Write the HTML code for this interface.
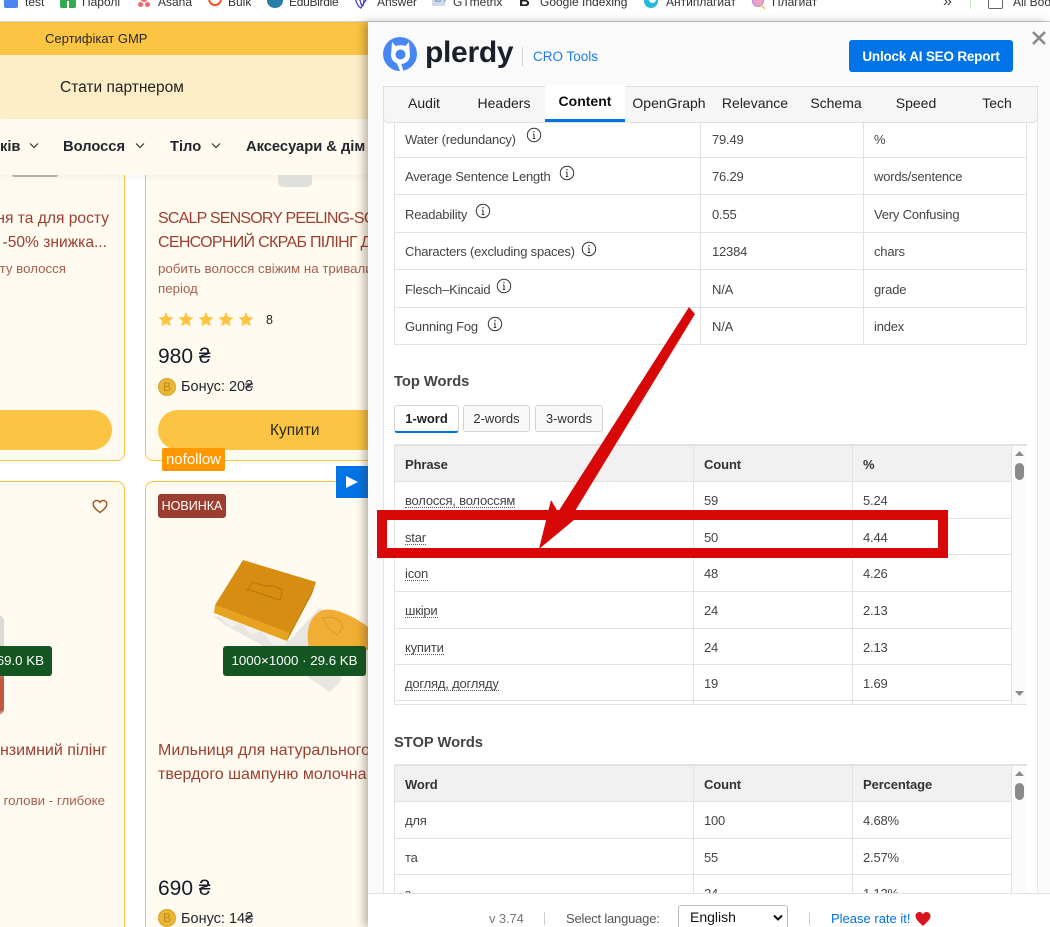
<!DOCTYPE html>
<html><head><meta charset="utf-8"><title>Plerdy</title>
<style>
html,body{margin:0;padding:0;width:1050px;height:927px;overflow:hidden;background:#fff;font-family:"Liberation Sans","Noto Sans CJK SC",sans-serif}
#w{position:relative;left:0;top:0;width:1050px;height:927px;overflow:hidden;background:#fff}
div,span,svg{position:absolute}
.t{white-space:nowrap;line-height:20px;height:20px;margin-top:1px}
.bm{font-size:12px;color:#333;top:-8px;margin-top:0}
.b{font-weight:bold}
.p{color:#444;font-size:13px;letter-spacing:-.2px}
.p.b{letter-spacing:-.1px}
.u{position:static;border-bottom:1px dotted #555;line-height:13px;display:inline-block}
.tl{font-size:14px;color:#222;top:93px;text-align:center;width:80px;margin-top:0}
.ti{color:#9a3f30;font-size:16px}
.su{color:#a5604f;font-size:13.3px}
.wb{top:405px;height:25px;background:#f8f8f8;border:1px solid #d5d5d5;border-radius:3px;font-size:13px;color:#333;text-align:center;line-height:25px}
.bar{background:#e2e2e2}
.coin{width:16px;height:16px;background:#e9b733;border:1px solid #d9a32a;border-radius:9px}
</style></head><body><div id="w">

<!-- bookmarks bar -->
<div style="left:0;top:0;width:1050px;height:21px;background:#fff"></div>
<div style="left:0;top:21px;width:1050px;height:1px;background:#cfcfcf"></div>
<div style="left:4px;top:-6px;width:14px;height:14px;background:#4a86f0;border-radius:2px"></div>
<div class="t bm" style="left:25px">test</div>
<div style="left:60px;top:-6px;width:16px;height:14px;background:#34a853;border-radius:2px"></div>
<div style="left:67px;top:1px;width:2px;height:7px;background:#fff"></div>
<div class="t bm" style="left:82px">Паролі</div>
<div style="left:141px;top:-3px;width:6px;height:5px;background:#f06a6a;border-radius:3px"></div>
<div style="left:138px;top:2px;width:5px;height:5px;background:#f06a6a;border-radius:3px"></div>
<div style="left:145px;top:2px;width:5px;height:5px;background:#f06a6a;border-radius:3px"></div>
<div class="t bm" style="left:158px">Asana</div>
<div style="left:208px;top:-4px;width:10px;height:8px;border:2px solid #f4511e;border-top:0;border-radius:0 0 8px 8px"></div>
<div class="t bm" style="left:228px">Bulk</div>
<div style="left:267px;top:-7px;width:16px;height:15px;background:#2a7fa8;border-radius:8px"></div>
<div class="t bm" style="left:289px;letter-spacing:-.3px">EduBirdie</div>
<svg style="left:354px;top:-4px" width="18" height="13"><path d="M1 0C2 8 5 11 7 12C9 8 12 3 16 0M5 0C6 5 7 8 8 10M10 0C10 4 10 7 9 10" fill="none" stroke="#4a3fd0" stroke-width="1.3"/></svg>
<div class="t bm" style="left:377px">Answer</div>
<div style="left:432px;top:-4px;width:13px;height:10px;background:#cfd9ea"></div>
<div class="t bm b" style="left:434px;top:-10px;font-size:10px;color:#7fa0cc">GT</div>
<div class="t bm" style="left:453px">GTmetrix</div>
<div class="t bm b" style="left:519px;font-size:15px;color:#222">B</div>
<div class="t bm" style="left:540px">Google Indexing</div>
<div style="left:644px;top:-6px;width:14px;height:14px;background:#26bcd7;border-radius:7px"></div>
<div style="left:649px;top:-5px;width:7px;height:8px;background:#fff;border-radius:4px"></div>
<div class="t bm" style="left:666px">Антиплагиат</div>
<div style="left:752px;top:-5px;width:10px;height:10px;background:#e9a6c8;border:1px solid #b889d8;border-radius:6px"></div>
<svg style="left:758px;top:2px" width="8" height="8"><path d="M1 1L7 7" stroke="#f2b56b" stroke-width="1.5"/></svg>
<div class="t bm" style="left:772px">Плагиат</div>
<div class="t bm" style="left:943px;font-size:16px;color:#444">»</div>
<div style="left:970px;top:0;width:1px;height:9px;background:#c9e4c0"></div>
<div style="left:988px;top:-6px;width:13px;height:13px;border:1px solid #666;border-radius:2px"></div>
<div class="t bm" style="left:1013px;width:37px;overflow:hidden">All Bookmarks</div>

<!-- cards -->
<div style="left:-20px;top:150px;width:143px;height:309px;background:#fffbf0;border:1px solid #fcc443;border-radius:8px"></div>
<div style="left:145px;top:150px;width:260px;height:309px;background:#fffbf0;border:1px solid #fcc443;border-radius:8px"></div>
<div style="left:-20px;top:481px;width:143px;height:445px;background:#fffbf0;border:1px solid #fcc443;border-bottom:0;border-radius:8px 8px 0 0"></div>
<div style="left:145px;top:481px;width:260px;height:445px;background:#fffbf0;border:1px solid #fcc443;border-bottom:0;border-radius:8px 8px 0 0"></div>

<!-- site header -->
<div style="left:0;top:22px;width:368px;height:33px;background:#fcc443"></div>
<div class="t" style="left:45px;top:28px;font-size:13px;color:#2a2a2a">Сертифікат GMP</div>
<div style="left:0;top:55px;width:368px;height:64px;background:#fdeec7"></div>
<div class="t" style="left:60px;top:77px;font-size:15.500px;color:#222">Стати партнером</div>

<!-- nav -->
<div style="left:0;top:119px;width:368px;height:56px;background:#fffaef;box-shadow:0 3px 6px rgba(0,0,0,.04)"></div>
<div style="left:12px;top:175px;width:46px;height:2px;background:#b5b2aa;border-radius:0 0 20px 20px"></div>
<div style="left:278px;top:175px;width:34px;height:12px;background:#dfdfdc;border-radius:0 0 5px 5px"></div>
<div class="t b" style="left:0;top:136px;font-size:14.700px;color:#22262e">ків</div>
<div class="t b" style="left:63px;top:136px;font-size:14.700px;color:#22262e">Волосся</div>
<div class="t b" style="left:170px;top:136px;font-size:14.700px;color:#22262e">Тіло</div>
<div class="t b" style="left:246px;top:136px;font-size:14.700px;color:#22262e">Аксесуари &amp; дім</div>
<svg style="left:29px;top:142px" width="10" height="8"><path d="M1 1.500L5 5.500L9 1.500" fill="none" stroke="#333" stroke-width="1.200"/></svg>
<svg style="left:135px;top:142px" width="10" height="8"><path d="M1 1.500L5 5.500L9 1.500" fill="none" stroke="#333" stroke-width="1.200"/></svg>
<svg style="left:211px;top:142px" width="10" height="8"><path d="M1 1.500L5 5.500L9 1.500" fill="none" stroke="#333" stroke-width="1.200"/></svg>

<!-- card 1 text -->
<div class="t ti" style="right:941px;top:208px;font-size:15.600px">ня та для росту</div>
<div class="t ti" style="right:943px;top:232px;font-size:15.600px">-50% знижка...</div>
<div class="t su" style="right:984px;top:258px">ту волосся</div>
<div style="left:-30px;top:410px;width:142px;height:40px;background:#fcc443;border-radius:20px"></div>

<!-- card 2 text -->
<div class="t ti" style="left:158px;top:208px;letter-spacing:-.8px">SCALP SENSORY PEELING-SCALP</div>
<div class="t ti" style="left:158px;top:232px;letter-spacing:-.7px">СЕНСОРНИЙ СКРАБ ПІЛІНГ ДЛЯ</div>
<div class="t su" style="left:158px;top:258px">робить волосся свіжим на тривалий</div>
<div class="t su" style="left:158px;top:278px">період</div>
<svg style="left:157px;top:311px" width="100" height="18" fill="#fcc443">
<polygon points="9,1 11.200,6 16.500,6.500 12.500,10 13.700,15.300 9,12.500 4.300,15.300 5.500,10 1.500,6.500 6.800,6"/>
<polygon points="29,1 31.200,6 36.500,6.500 32.500,10 33.700,15.300 29,12.500 24.300,15.300 25.500,10 21.500,6.500 26.800,6"/>
<polygon points="49,1 51.200,6 56.500,6.500 52.500,10 53.700,15.300 49,12.500 44.300,15.300 45.500,10 41.500,6.500 46.800,6"/>
<polygon points="69,1 71.200,6 76.500,6.500 72.500,10 73.700,15.300 69,12.500 64.300,15.300 65.500,10 61.500,6.500 66.800,6"/>
<polygon points="89,1 91.200,6 96.500,6.500 92.500,10 93.700,15.300 89,12.500 84.300,15.300 85.500,10 81.500,6.500 86.800,6"/>
</svg>
<div class="t" style="left:266px;top:309px;font-size:12.500px;color:#222">8</div>
<div class="t" style="left:158px;top:346px;font-size:21px;color:#161b2b">980 ₴</div>
<div class="coin" style="left:158px;top:378px"></div>
<div class="t" style="left:158px;top:376px;width:18px;text-align:center;font-size:12px;color:#b98a1c">B</div>
<div class="t" style="left:181px;top:376px;font-size:14.500px;color:#20242e">Бонус: 20₴</div>
<div style="left:158px;top:410px;width:240px;height:40px;background:#fcc443;border-radius:20px"></div>
<div class="t" style="left:270px;top:420px;font-size:15.500px;color:#2a2a1a">Купити</div>
<div class="t" style="left:162px;top:448px;width:63px;height:23px;line-height:23px;margin-top:0;background:#ff9800;border-radius:2px;color:#fff;font-size:15px;text-align:center">nofollow</div>
<div style="left:336px;top:466px;width:32px;height:32px;background:#0073e6"></div>
<svg style="left:345px;top:475px" width="14" height="14"><polygon points="1,1 13,7 1,13" fill="#fff"/></svg>

<!-- row 2 -->
<svg style="left:92px;top:499px" width="16" height="15"><path d="M8 13.500C4 10.500 1.200 8 1.200 5C1.200 2.800 3 1.500 4.700 1.500C6 1.500 7.300 2.200 8 3.400C8.700 2.200 10 1.500 11.300 1.500C13 1.500 14.800 2.800 14.800 5C14.800 8 12 10.500 8 13.500Z" fill="none" stroke="#9a5a30" stroke-width="1.400"/></svg>
<div style="left:-20px;top:615px;width:24px;height:100px;background:linear-gradient(#dcdad6 0,#dcdad6 45%,#c4573f 65%,#c4573f 95%,#ccc 100%);border-radius:6px"></div>
<div class="t" style="left:-20px;top:646px;width:72px;height:30px;line-height:30px;margin-top:0;background:#135622;border-radius:3px;color:#fff;font-size:13.300px;text-align:right"><span style="position:static;padding-right:8px">69.0 KB</span></div>
<div class="t" style="left:158px;top:494px;width:68px;height:24px;line-height:24px;margin-top:0;background:#9b3d2f;border-radius:3px;color:#fff;font-size:12.500px;text-align:center">НОВИНКА</div>

<!-- soap -->
<svg style="left:205px;top:555px" width="163" height="140">
<polygon points="7,60 20,70 53,88 125,137 135,127 145,85 115,52 85,85" fill="#e9e5e0"/>
<path d="M14 62L26 72L36 68L46 80L56 76L68 90L80 90L95 60Z" fill="#f4f1ed"/>
<polygon points="38,5 111,27 84,78 10,50" fill="#d68d11"/>
<polygon points="10,50 84,78 82,86 9,58" fill="#e8a31e"/>
<polygon points="111,27 84,78 82,86 107,39" fill="#c5830d"/>
<path d="M42 35L48 27L60 31L70 31L77 35L76 43L74 45L45 35Z" fill="none" stroke="#b97a0d" stroke-width="1.300"/>
<path d="M104 92C100 75 105 60 118 55C130 52 150 62 163 72L163 95Z" fill="#f0ae35"/>
<path d="M118 63L127 62L135 66L138 72L132 80L122 72Z" fill="none" stroke="#dd9a25" stroke-width="1"/>
</svg>
<div class="t" style="left:223px;top:646px;width:143px;height:30px;line-height:30px;margin-top:0;background:#135622;border-radius:3px;color:#fff;font-size:13.300px;text-align:center">1000×1000 · 29.6 KB</div>

<div class="t ti" style="right:943px;top:740px">нзимний пілінг</div>
<div class="t su" style="right:945px;top:790px">голови - глибоке</div>
<div class="t ti" style="left:158px;top:740px">Мильниця для натурального</div>
<div class="t ti" style="left:158px;top:764px">твердого шампуню молочна</div>
<div class="t" style="left:158px;top:878px;font-size:21px;color:#161b2b">690 ₴</div>
<div class="coin" style="left:158px;top:909px"></div>
<div class="t" style="left:158px;top:909px;width:18px;height:16px;line-height:16px;text-align:center;font-size:12px;color:#b98a1c">B</div>
<div class="t" style="left:181px;top:910px;height:16px;line-height:16px;font-size:14.500px;color:#20242e">Бонус: 14₴</div>

<!-- panel -->
<div style="left:368px;top:22px;width:682px;height:905px;background:#fafafa;box-shadow:-4px 0 8px rgba(60,50,30,.35)"></div>

<svg style="left:382px;top:36px" width="36" height="36" viewBox="0 0 36 36">
<circle cx="18" cy="18" r="17" fill="#4687f4"/>
<path d="M10 6L13.500 10C16.500 9 20.500 9 23.500 10L27 6L28 19C28 24.500 23.500 28 18.500 28C13.500 28 9 24.500 9 19Z" fill="#fff"/>
<polygon points="14,25 19,27 21.500,35 18,35" fill="#fff"/>
<circle cx="18.500" cy="18.500" r="5" fill="#4687f4"/>
</svg>
<div class="t b" style="left:425px;top:33px;height:40px;line-height:40px;margin-top:0;font-size:30px;letter-spacing:-.3px;color:#1b1f2a">plerdy</div>
<div style="left:522px;top:47px;width:1px;height:19px;background:#d5d5d5"></div>
<div class="t" style="left:533px;top:47px;margin-top:0;font-size:13.500px;color:#1a7fe8">CRO Tools</div>
<div class="t b" style="left:849px;top:40px;width:164px;height:32px;line-height:33px;margin-top:0;background:#0073e6;border-radius:3px;color:#fff;font-size:13.500px;letter-spacing:-.2px;text-align:center">Unlock AI SEO Report</div>
<svg style="left:1031px;top:30px" width="16" height="16"><path d="M2 2L14 14M14 2L2 14" stroke="#8a8a8a" stroke-width="2.600"/></svg>

<!-- white body -->
<div style="left:383px;top:86px;width:653px;height:830px;background:#fff;border:1px solid #e4e4e4"></div>
<!-- tabs -->
<div style="left:383px;top:86px;width:653px;height:35px;background:#f6f6f6;border:1px solid #e0e0e0;border-radius:0 0 5px 5px"></div>
<div style="left:545px;top:86px;width:80px;height:33px;background:#fff;border-bottom:3px solid #0073e6"></div>
<div class="t tl" style="left:384px">Audit</div>
<div class="t tl" style="left:464px">Headers</div>
<div class="t tl b" style="left:545px;top:91px;color:#111">Content</div>
<div class="t tl" style="left:629px">OpenGraph</div>
<div class="t tl" style="left:715px">Relevance</div>
<div class="t tl" style="left:796px">Schema</div>
<div class="t tl" style="left:876px">Speed</div>
<div class="t tl" style="left:957px">Tech</div>

<!-- metrics table -->
<div class="bar" style="left:394px;top:123px;width:1px;height:222px"></div>
<div class="bar" style="left:700px;top:123px;width:1px;height:222px"></div>
<div class="bar" style="left:863px;top:123px;width:1px;height:222px"></div>
<div class="bar" style="left:1026px;top:123px;width:1px;height:222px"></div>
<div class="bar" style="left:394px;top:157px;width:633px;height:1px"></div>
<div class="bar" style="left:394px;top:194px;width:633px;height:1px"></div>
<div class="bar" style="left:394px;top:232px;width:633px;height:1px"></div>
<div class="bar" style="left:394px;top:269px;width:633px;height:1px"></div>
<div class="bar" style="left:394px;top:307px;width:633px;height:1px"></div>
<div class="bar" style="left:394px;top:344px;width:633px;height:1px"></div>

<div class="t p" style="left:405px;top:129px">Water (redundancy)</div><div class="t p" style="left:712px;top:129px">79.49</div><div class="t p" style="left:874px;top:129px">%</div>
<div class="t p" style="left:405px;top:166px">Average Sentence Length</div><div class="t p" style="left:712px;top:166px">76.29</div><div class="t p" style="left:874px;top:166px">words/sentence</div>
<div class="t p" style="left:405px;top:204px">Readability</div><div class="t p" style="left:712px;top:204px">0.55</div><div class="t p" style="left:874px;top:204px">Very Confusing</div>
<div class="t p" style="left:405px;top:241px">Characters (excluding spaces)</div><div class="t p" style="left:712px;top:241px">12384</div><div class="t p" style="left:874px;top:241px">chars</div>
<div class="t p" style="left:405px;top:279px">Flesch–Kincaid</div><div class="t p" style="left:712px;top:279px">N/A</div><div class="t p" style="left:874px;top:279px">grade</div>
<div class="t p" style="left:405px;top:316px">Gunning Fog</div><div class="t p" style="left:712px;top:316px">N/A</div><div class="t p" style="left:874px;top:316px">index</div>

<svg style="left:526px;top:127px" width="16" height="16"><circle cx="8" cy="8" r="6.700" fill="none" stroke="#333"/><path d="M8 7V11.500M6.800 11.500H9.200M7 7H8" stroke="#333" fill="none"/><rect x="7.400" y="4" width="1.200" height="1.300" fill="#333"/></svg>
<svg style="left:559px;top:165px" width="16" height="16"><circle cx="8" cy="8" r="6.700" fill="none" stroke="#333"/><path d="M8 7V11.500M6.800 11.500H9.200M7 7H8" stroke="#333" fill="none"/><rect x="7.400" y="4" width="1.200" height="1.300" fill="#333"/></svg>
<svg style="left:475px;top:203px" width="16" height="16"><circle cx="8" cy="8" r="6.700" fill="none" stroke="#333"/><path d="M8 7V11.500M6.800 11.500H9.200M7 7H8" stroke="#333" fill="none"/><rect x="7.400" y="4" width="1.200" height="1.300" fill="#333"/></svg>
<svg style="left:581px;top:241px" width="16" height="16"><circle cx="8" cy="8" r="6.700" fill="none" stroke="#333"/><path d="M8 7V11.500M6.800 11.500H9.200M7 7H8" stroke="#333" fill="none"/><rect x="7.400" y="4" width="1.200" height="1.300" fill="#333"/></svg>
<svg style="left:496px;top:278px" width="16" height="16"><circle cx="8" cy="8" r="6.700" fill="none" stroke="#333"/><path d="M8 7V11.500M6.800 11.500H9.200M7 7H8" stroke="#333" fill="none"/><rect x="7.400" y="4" width="1.200" height="1.300" fill="#333"/></svg>
<svg style="left:487px;top:316px" width="16" height="16"><circle cx="8" cy="8" r="6.700" fill="none" stroke="#333"/><path d="M8 7V11.500M6.800 11.500H9.200M7 7H8" stroke="#333" fill="none"/><rect x="7.400" y="4" width="1.200" height="1.300" fill="#333"/></svg>

<!-- top words -->
<div class="t b" style="left:394px;top:371px;font-size:14.700px;color:#444">Top Words</div>
<div class="wb b" style="left:394px;width:63px;background:#fff;border-bottom:2px solid #0073e6;color:#222;margin-top:0">1-word</div>
<div class="wb" style="left:463px;width:65px">2-words</div>
<div class="wb" style="left:535px;width:66px">3-words</div>

<div class="bar" style="left:394px;top:444px;width:633px;height:2px"></div>
<div style="left:395px;top:446px;width:616px;height:35px;background:#f1f1f1"></div>
<div style="left:1012px;top:446px;width:15px;height:258px;background:#fbfbfb"></div>
<div class="bar" style="left:394px;top:444px;width:1px;height:261px"></div>
<div class="bar" style="left:693px;top:446px;width:1px;height:259px"></div>
<div class="bar" style="left:852px;top:446px;width:1px;height:259px"></div>
<div class="bar" style="left:1011px;top:446px;width:1px;height:259px"></div>
<div class="bar" style="left:394px;top:481px;width:617px;height:1px"></div>
<div class="bar" style="left:394px;top:518px;width:617px;height:1px"></div>
<div class="bar" style="left:394px;top:554px;width:617px;height:1px"></div>
<div class="bar" style="left:394px;top:591px;width:617px;height:1px"></div>
<div class="bar" style="left:394px;top:628px;width:617px;height:1px"></div>
<div class="bar" style="left:394px;top:664px;width:617px;height:1px"></div>
<div class="bar" style="left:394px;top:700px;width:617px;height:1px"></div>
<div class="bar" style="left:394px;top:704px;width:633px;height:1px"></div>

<div class="t p b" style="left:405px;top:454px;color:#333">Phrase</div><div class="t p b" style="left:704px;top:454px;color:#333">Count</div><div class="t p b" style="left:863px;top:454px;color:#333">%</div>
<div class="t p" style="left:405px;top:490px"><span class="u">волосся, волоссям</span></div><div class="t p" style="left:704px;top:490px">59</div><div class="t p" style="left:863px;top:490px">5.24</div>
<div class="t p" style="left:405px;top:527px"><span class="u">star</span></div><div class="t p" style="left:704px;top:527px">50</div><div class="t p" style="left:863px;top:527px">4.44</div>
<div class="t p" style="left:405px;top:563px"><span class="u">icon</span></div><div class="t p" style="left:704px;top:563px">48</div><div class="t p" style="left:863px;top:563px">4.26</div>
<div class="t p" style="left:405px;top:600px"><span class="u">шкіри</span></div><div class="t p" style="left:704px;top:600px">24</div><div class="t p" style="left:863px;top:600px">2.13</div>
<div class="t p" style="left:405px;top:637px"><span class="u">купити</span></div><div class="t p" style="left:704px;top:637px">24</div><div class="t p" style="left:863px;top:637px">2.13</div>
<div class="t p" style="left:405px;top:673px"><span class="u">догляд, догляду</span></div><div class="t p" style="left:704px;top:673px">19</div><div class="t p" style="left:863px;top:673px">1.69</div>

<svg style="left:1012px;top:446px" width="15" height="258"><path d="M3 10L7.500 5L12 10Z" fill="#8a8a8a"/><rect x="3" y="17" width="9" height="17" rx="4.500" fill="#8a8a8a"/><path d="M3 245L7.500 250L12 245Z" fill="#8a8a8a"/></svg>

<!-- stop words -->
<div class="t b" style="left:394px;top:732px;font-size:14.700px;color:#444">STOP Words</div>
<div class="bar" style="left:394px;top:764px;width:633px;height:2px"></div>
<div style="left:395px;top:766px;width:616px;height:35px;background:#f1f1f1"></div>
<div style="left:1012px;top:766px;width:15px;height:127px;background:#fbfbfb"></div>
<div class="bar" style="left:394px;top:764px;width:1px;height:129px"></div>
<div class="bar" style="left:693px;top:766px;width:1px;height:127px"></div>
<div class="bar" style="left:852px;top:766px;width:1px;height:127px"></div>
<div class="bar" style="left:1011px;top:766px;width:1px;height:127px"></div>
<div class="bar" style="left:394px;top:801px;width:617px;height:1px"></div>
<div class="bar" style="left:394px;top:838px;width:617px;height:1px"></div>
<div class="bar" style="left:394px;top:874px;width:617px;height:1px"></div>
<div class="t p b" style="left:405px;top:774px;color:#333">Word</div><div class="t p b" style="left:704px;top:774px;color:#333">Count</div><div class="t p b" style="left:863px;top:774px;color:#333">Percentage</div>
<div class="t p" style="left:405px;top:810px">для</div><div class="t p" style="left:704px;top:810px">100</div><div class="t p" style="left:863px;top:810px">4.68%</div>
<div class="t p" style="left:405px;top:847px">та</div><div class="t p" style="left:704px;top:847px">55</div><div class="t p" style="left:863px;top:847px">2.57%</div>
<div class="t p" style="left:405px;top:883px">з</div><div class="t p" style="left:704px;top:883px">24</div><div class="t p" style="left:863px;top:883px">1.12%</div>
<svg style="left:1012px;top:766px" width="15" height="127"><path d="M3 10L7.500 5L12 10Z" fill="#8a8a8a"/><rect x="3" y="17" width="9" height="17" rx="4.500" fill="#8a8a8a"/></svg>

<!-- footer -->
<div style="left:368px;top:893px;width:682px;height:33px;background:#fff;border-top:1px solid #e2e2e2"></div>
<div class="t" style="left:489px;top:910px;height:16px;line-height:16px;font-size:13px;letter-spacing:-.1px;color:#777">v 3.74</div>
<div style="left:544px;top:912px;width:1px;height:13px;background:#ccc"></div>
<div class="t" style="left:566px;top:910px;height:16px;line-height:16px;font-size:13px;letter-spacing:-.2px;color:#555">Select language:</div>
<div style="left:678px;top:905px;width:108px;height:22px;background:#fff;border:1px solid #bbb;border-bottom:0;border-radius:3px 3px 0 0"></div>
<div class="t" style="left:690px;top:906px;font-size:14px;color:#111">English</div>
<svg style="left:773px;top:914px" width="10" height="8"><path d="M1 1.500L5 5.500L9 1.500" fill="none" stroke="#111" stroke-width="2"/></svg>
<div style="left:809px;top:912px;width:1px;height:13px;background:#ccc"></div>
<div class="t" style="left:831px;top:910px;height:16px;line-height:16px;font-size:13px;color:#0073e6">Please rate it!</div>
<svg style="left:915px;top:911px" width="16" height="16"><path d="M8 15C4 11 .5 8.500 .5 5C.5 2.500 2.500 1 4.500 1C6 1 7.300 2 8 3.200C8.700 2 10 1 11.500 1C13.500 1 15.500 2.500 15.500 5C15.500 8.500 12 11 8 15Z" fill="#d8141c"/></svg>

<!-- red annotation -->
<svg style="left:0;top:0" width="1050" height="927">
<rect x="382" y="515" width="561" height="38" fill="none" stroke="#d80808" stroke-width="10"/>
<polygon points="689,307 695,314 572,516 586,510 539,549 551,500 558,512" fill="#d80808"/>
</svg>
</div></body></html>
